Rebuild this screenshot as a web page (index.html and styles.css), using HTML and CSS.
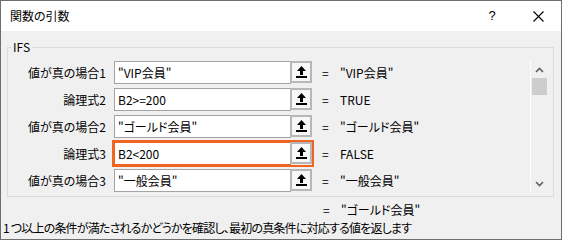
FILE: index.html
```html
<!DOCTYPE html>
<html lang="ja">
<head>
  <meta charset="UTF-8">
  <title>関数の引数</title>
  <link rel="stylesheet" href="styles.css">
</head>
<body>
  <div class="dialog">
    <div class="titlebar">
      <span class="title">関数の引数</span>
      <span class="caption help">?</span>
      <span class="caption close">
        <svg width="11" height="11" viewBox="0 0 11 11"><path d="M0.5 0.5 L10.5 10.5 M10.5 0.5 L0.5 10.5" stroke="#000" stroke-width="1.1" fill="none"/></svg>
      </span>
    </div>

    <div class="content">
      <fieldset class="group">
        <legend>IFS</legend>
        <div class="args">
          <div class="rows">
            <div class="row">
              <label class="name">値が真の場合1</label>
              <div class="field"><input class="box" value='"VIP会員"'><button class="ref"><svg width="11" height="12" viewBox="0 0 11 12"><path d="M5.5 0 L10 5 H7 V9 H4 V5 H1 Z" fill="#000"/><rect x="0" y="10" width="11" height="2" fill="#000"/></svg></button></div>
              <span class="eq">=</span><span class="val">"VIP会員"</span>
            </div>
            <div class="row">
              <label class="name">論理式2</label>
              <div class="field"><input class="box" value="B2>=200"><button class="ref"><svg width="11" height="12" viewBox="0 0 11 12"><path d="M5.5 0 L10 5 H7 V9 H4 V5 H1 Z" fill="#000"/><rect x="0" y="10" width="11" height="2" fill="#000"/></svg></button></div>
              <span class="eq">=</span><span class="val">TRUE</span>
            </div>
            <div class="row">
              <label class="name">値が真の場合2</label>
              <div class="field"><input class="box" value='"ゴールド会員"'><button class="ref"><svg width="11" height="12" viewBox="0 0 11 12"><path d="M5.5 0 L10 5 H7 V9 H4 V5 H1 Z" fill="#000"/><rect x="0" y="10" width="11" height="2" fill="#000"/></svg></button></div>
              <span class="eq">=</span><span class="val">"ゴールド会員"</span>
            </div>
            <div class="row">
              <label class="name">論理式3</label>
              <div class="field focused"><input class="box" value="B2<200"><button class="ref"><svg width="11" height="12" viewBox="0 0 11 12"><path d="M5.5 0 L10 5 H7 V9 H4 V5 H1 Z" fill="#000"/><rect x="0" y="10" width="11" height="2" fill="#000"/></svg></button></div>
              <span class="eq">=</span><span class="val">FALSE</span>
            </div>
            <div class="row">
              <label class="name">値が真の場合3</label>
              <div class="field"><input class="box" value='"一般会員"'><button class="ref"><svg width="11" height="12" viewBox="0 0 11 12"><path d="M5.5 0 L10 5 H7 V9 H4 V5 H1 Z" fill="#000"/><rect x="0" y="10" width="11" height="2" fill="#000"/></svg></button></div>
              <span class="eq">=</span><span class="val">"一般会員"</span>
            </div>
          </div>

          <div class="scrollbar">
            <div class="arrow"><svg width="9" height="6" viewBox="0 0 9 6"><path d="M1 5 L4.5 1.5 L8 5" stroke="#606060" stroke-width="1.6" fill="none"/></svg></div>
            <div class="thumb"></div>
            <div class="track"></div>
            <div class="arrow"><svg width="9" height="6" viewBox="0 0 9 6"><path d="M1 1 L4.5 4.5 L8 1" stroke="#606060" stroke-width="1.6" fill="none"/></svg></div>
          </div>
        </div>
      </fieldset>

      <div class="result"><span class="eq">=</span><span class="val">"ゴールド会員"</span></div>
    </div>

    <p class="desc">1 つ以上の条件が満たされるかどうかを確認し、最初の真条件に対応する値を返します</p>
  </div>
</body>
</html>
```

FILE: styles.css
```css
body {
  margin: 0;
  font-family: "Noto Sans CJK JP", "Noto Sans", sans-serif;
  font-size: 12px;
  font-feature-settings: "palt";
  color: #000;
}

.dialog {
  width: 562px;
  height: 240px;
  box-sizing: border-box;
  border: 1px solid #6e6e6e;
  background: #f0f0f0;
  overflow: hidden;
}

.titlebar {
  height: 30px;
  background: #fff;
  display: flex;
  align-items: center;
  line-height: 14px;
}

.title {
  padding-left: 9px;
}

.caption {
  width: 46px;
  height: 30px;
  display: flex;
  align-items: center;
  justify-content: center;
}

.help {
  margin-left: auto;
  font-family: "Liberation Sans", sans-serif;
  font-size: 13px;
}

.content {
  padding: 9px 7px 0 6px;
}

.group {
  margin: 0;
  min-width: 0;
  border: 1px solid #dcdcdc;
  padding: 7px 6px 4px 3px;
}

.group legend {
  padding: 0 2px;
  line-height: 14px;
}

.args {
  display: flex;
}

.rows {
  flex: 1;
  display: flex;
  flex-direction: column;
  gap: 4px;
}

.row {
  height: 23px;
  display: flex;
  align-items: center;
  line-height: 14px;
}

.name {
  width: 95px;
  margin-right: 8px;
  text-align: right;
}

.field {
  display: flex;
  height: 23px;
}

.field.focused {
  outline: 2px solid #f0651f;
}

.field.focused .box {
  border-color: #f0651f;
}

.box {
  appearance: none;
  width: 177px;
  height: 23px;
  box-sizing: border-box;
  margin: 0;
  padding: 0 3px;
  border: 1px solid #a3a3a3;
  background: #fff;
  font: inherit;
  font-feature-settings: "palt";
  color: #000;
  outline: none;
}

.ref {
  width: 22px;
  height: 22px;
  margin: 0 0 0 -1px;
  padding: 0;
  box-sizing: border-box;
  border: 2px solid #b7b7b7;
  background: #f7f7f7;
  display: flex;
  align-items: center;
  justify-content: center;
}

.eq {
  display: inline-block;
  width: 18px;
  margin-left: 10px;
}

.scrollbar {
  width: 16px;
  margin-left: 6px;
  border-left: 1px solid #fff;
  display: flex;
  flex-direction: column;
}

.scrollbar .arrow {
  height: 17px;
  display: flex;
  align-items: center;
  justify-content: center;
}

.thumb {
  height: 17px;
  width: 15px;
  margin-left: 1px;
  background: #cdcdcd;
}

.track {
  flex: 1;
}

.result {
  margin: 6px 0 0 306px;
  line-height: 14px;
}

.desc {
  margin: 4px 0 0;
  padding-left: 2px;
  line-height: 14px;
  letter-spacing: -0.8px;
  white-space: nowrap;
}
```
